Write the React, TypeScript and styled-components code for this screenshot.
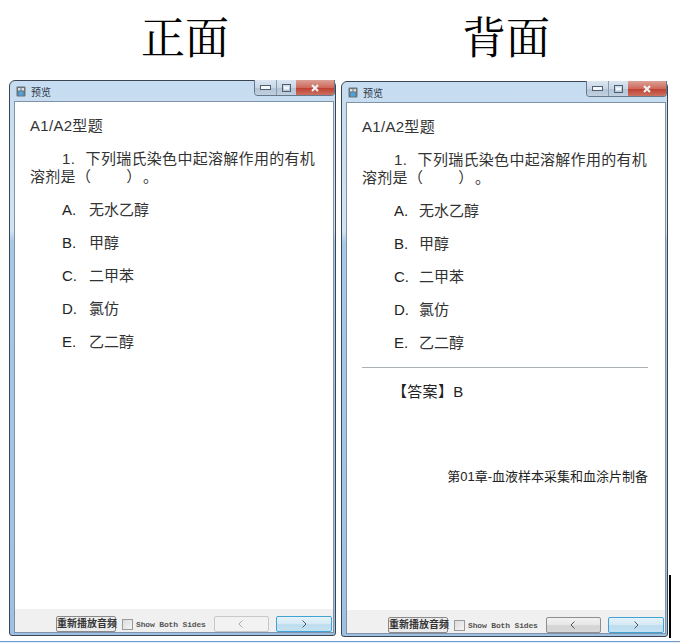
import React from 'react';
import styled, { createGlobalStyle } from 'styled-components';

const GlobalStyle = createGlobalStyle`
  html, body {
    margin: 0;
    padding: 0;
    background: #ffffff;
  }
`;

const sans = `"Liberation Sans", "Noto Sans CJK SC", sans-serif`;

const Page = styled.div`
  position: relative;
  width: 680px;
  height: 643px;
  overflow: hidden;
  background: #ffffff;
  font-family: ${sans};
`;

const Headings = styled.div`
  display: flex;
  height: 80px;
`;

const Heading = styled.h1<{ $width: number }>`
  width: ${(p) => p.$width}px;
  margin: 0;
  padding-top: 10px;
  box-sizing: border-box;
  text-align: center;
  font-family: "Noto Serif CJK SC", "Liberation Serif", "Noto Sans CJK SC", serif;
  font-size: 44px;
  line-height: 50px;
  font-weight: 400;
  color: #000000;
`;

const Windows = styled.div`
  display: flex;
  gap: 5px;
  padding-left: 9px;
  align-items: flex-start;
`;

const Frame = styled.div<{ $top: number }>`
  width: 327px;
  height: 556px;
  margin-top: ${(p) => p.$top}px;
  box-sizing: border-box;
  display: flex;
  flex-direction: column;
  border: 1px solid #3d4650;
  border-radius: 6px 6px 3px 3px;
  background: linear-gradient(180deg, #c6dcf0 0%, #d2e3f3 27%, #a8c8e8 29%, #9dc1e5 100%);
`;

const TitleBar = styled.div`
  position: relative;
  height: 20px;
  display: flex;
  align-items: center;
  gap: 5px;
  padding-left: 6px;
  font-size: 10px;
  color: #2a3744;
`;

const AppIcon = styled.svg`
  width: 10px;
  height: 11px;
  flex: none;
`;

const Controls = styled.div`
  position: absolute;
  top: -1px;
  right: 0;
  display: flex;
  height: 15px;
  border: 1px solid #66788a;
  border-top: none;
  border-radius: 0 0 4px 4px;
  overflow: hidden;
`;

const Control = styled.div<{ $width: number; $close?: boolean }>`
  width: ${(p) => p.$width}px;
  display: flex;
  align-items: center;
  justify-content: center;
  border-left: ${(p) => (p.$close ? 'none' : '1px solid #8a9bad')};
  background: ${(p) =>
    p.$close
      ? 'linear-gradient(180deg, #dca196 0%, #cf6a5c 50%, #bf4132 55%, #cb7161 100%)'
      : 'linear-gradient(180deg, #dbe6f1 0%, #c8d7e6 50%, #b2c4d6 55%, #c2d0df 100%)'};
  &:first-child {
    border-left: none;
  }
`;

const Client = styled.div`
  flex: 1;
  margin: 0 1px 2px 4px;
  min-height: 0;
  display: flex;
  flex-direction: column;
  border: 1px solid #7f93a8;
  background: #ffffff;
`;

const Content = styled.div`
  flex: 1;
  padding: 14px 16px 0 15px;
  color: #333333;
  font-size: 15px;
`;

const SectionTitle = styled.div`
  height: 20px;
  line-height: 20px;
  letter-spacing: 0.3px;
  color: #333333;
`;

const Question = styled.p`
  margin: 14px 0 0;
  width: 290px;
  line-height: 18px;
  text-indent: 32px;
  letter-spacing: 0.3px;
  color: #333333;
`;

const Options = styled.ul`
  list-style: none;
  margin: 7px 0 0;
  padding: 0 0 0 32px;
`;

const Option = styled.li`
  display: flex;
  height: 33px;
  line-height: 33px;
`;

const OptionKey = styled.span<{ $narrow?: boolean }>`
  width: ${(p) => (p.$narrow ? 25 : 27)}px;
  color: #222222;
`;

const Divider = styled.hr`
  margin: 8px 0 0;
  width: 286px;
  height: 1px;
  border: none;
  background: #a9b0b6;
`;

const Answer = styled.div`
  margin: 14px 0 0 30px;
  line-height: 20px;
  letter-spacing: 0.3px;
  color: #222222;
`;

const Chapter = styled.div`
  margin-top: 65px;
  width: 286px;
  text-align: right;
  font-size: 13px;
  line-height: 20px;
  color: #222222;
`;

const Footer = styled.div`
  height: 23px;
  display: flex;
  align-items: flex-end;
  padding: 0 1px 0 41px;
  background: #f0f0f0;
`;

const ReplayButton = styled.div`
  width: 60px;
  height: 16px;
  box-sizing: border-box;
  text-align: center;
  border: 1px solid #8a8a8a;
  border-radius: 2px;
  background: #ececec;
  font-size: 10px;
  line-height: 14px;
  font-weight: 700;
  color: #333333;
  white-space: nowrap;
`;

const Check = styled.label`
  width: 92px;
  height: 16px;
  margin-left: 6px;
  display: flex;
  align-items: center;
  gap: 3px;
  font-family: "Liberation Mono", monospace;
  font-size: 8px;
  letter-spacing: -0.15px;
  font-weight: 700;
  color: #555555;
  white-space: nowrap;
`;

const CheckBox = styled.span`
  width: 9px;
  height: 9px;
  flex: none;
  border: 1px solid #9a9a9a;
  background: linear-gradient(135deg, #dcdcdc, #f4f4f4);
`;

const NavButton = styled.div<{ $primary?: boolean; $enabled?: boolean }>`
  width: 56px;
  height: 16px;
  box-sizing: border-box;
  margin-left: ${(p) => (p.$primary ? '7px' : '0')};
  display: flex;
  align-items: center;
  justify-content: center;
  border: 1px solid ${(p) => (p.$primary ? '#3fa3d6' : p.$enabled ? '#8f8f8f' : '#c8c8c8')};
  border-radius: 2px;
  background: ${(p) =>
    p.$primary
      ? 'linear-gradient(180deg, #e6f3fa 0%, #d4e9f5 50%, #bcdcee 55%, #c6e2f1 100%)'
      : p.$enabled
      ? 'linear-gradient(180deg, #f2f2f2 0%, #e6e6e6 50%, #d4d4d4 55%, #d8d8d8 100%)'
      : '#f2f2f2'};
`;

const Chevron = styled.svg<{ $muted?: boolean }>`
  width: 6px;
  height: 8px;
  stroke: ${(p) => (p.$muted ? '#a8a8a8' : '#555555')};
  fill: none;
`;

const BottomEdge = styled.div`
  position: absolute;
  left: 0;
  right: 0;
  bottom: 0;
  height: 1px;
  border-top: 1px solid #6d9bd0;
  background: #e6eef7;
`;

const BlackEdge = styled.div`
  position: absolute;
  left: 669px;
  top: 575px;
  width: 2px;
  height: 63px;
  background: #000000;
`;

const options = [
  ['A.', '无水乙醇'],
  ['B.', '甲醇'],
  ['C.', '二甲苯'],
  ['D.', '氯仿'],
  ['E.', '乙二醇'],
];

const PreviewWindow = ({ top, back }: { top: number; back?: boolean }) => (
  <Frame $top={top}>
    <TitleBar>
      <AppIcon viewBox="0 0 10 11">
        <rect x="0.5" y="0.5" width="9" height="10" rx="1" fill="#6b7278" />
        <rect x="2" y="2" width="2.5" height="2.5" fill="#d8dde0" />
        <rect x="5.5" y="2" width="2.5" height="2.5" fill="#d8dde0" />
        <rect x="2.5" y="5.5" width="5" height="4" fill="#4aa3df" />
      </AppIcon>
      预览
      <Controls>
        <Control $width={21}>
          <svg width="11" height="5" viewBox="0 0 11 5">
            <rect x="0.5" y="0.5" width="10" height="4" fill="#f4f7fa" stroke="#4f5f70" />
          </svg>
        </Control>
        <Control $width={19}>
          <svg width="9" height="8" viewBox="0 0 9 8">
            <rect x="0.5" y="0.5" width="8" height="7" fill="none" stroke="#4f5f70" />
            <rect x="2" y="2.5" width="5" height="3" fill="#f4f7fa" />
          </svg>
        </Control>
        <Control $width={38} $close>
          <svg width="10" height="8" viewBox="0 0 10 8">
            <path d="M2 1l6 6M8 1L2 7" stroke="#eef0f2" strokeWidth="2.2" />
          </svg>
        </Control>
      </Controls>
    </TitleBar>
    <Client>
      <Content>
        <SectionTitle>A1/A2型题</SectionTitle>
        <Question>
          {'1.\u00A0\u00A0\u200A下列瑞氏染色中起溶解作用的有机溶剂是（\u3000\u3000\u00A0）\u200A。'}
        </Question>
        <Options>
          {options.map(([key, label]) => (
            <Option key={key}>
              <OptionKey $narrow={back}>{key}</OptionKey>
              {label}
            </Option>
          ))}
        </Options>
        {back && (
          <>
            <Divider />
            <Answer>【答案】B</Answer>
            <Chapter>第01章-血液样本采集和血涂片制备</Chapter>
          </>
        )}
      </Content>
      <Footer>
        <ReplayButton>重新播放音频</ReplayButton>
        <Check>
          <CheckBox />
          Show Both Sides
        </Check>
        <NavButton $enabled={back}>
          <Chevron viewBox="0 0 6 8" $muted={!back}>
            <path d="M4.5 0.5L1 4l3.5 3.5" />
          </Chevron>
        </NavButton>
        <NavButton $primary>
          <Chevron viewBox="0 0 6 8">
            <path d="M1.5 0.5L5 4L1.5 7.5" />
          </Chevron>
        </NavButton>
      </Footer>
    </Client>
  </Frame>
);

export default function App() {
  return (
    <Page>
      <GlobalStyle />
      <Headings>
        <Heading $width={370}>正面</Heading>
        <Heading $width={272}>背面</Heading>
      </Headings>
      <Windows>
        <PreviewWindow top={0} />
        <PreviewWindow top={1} back />
      </Windows>
      <BlackEdge />
      <BottomEdge />
    </Page>
  );
}
